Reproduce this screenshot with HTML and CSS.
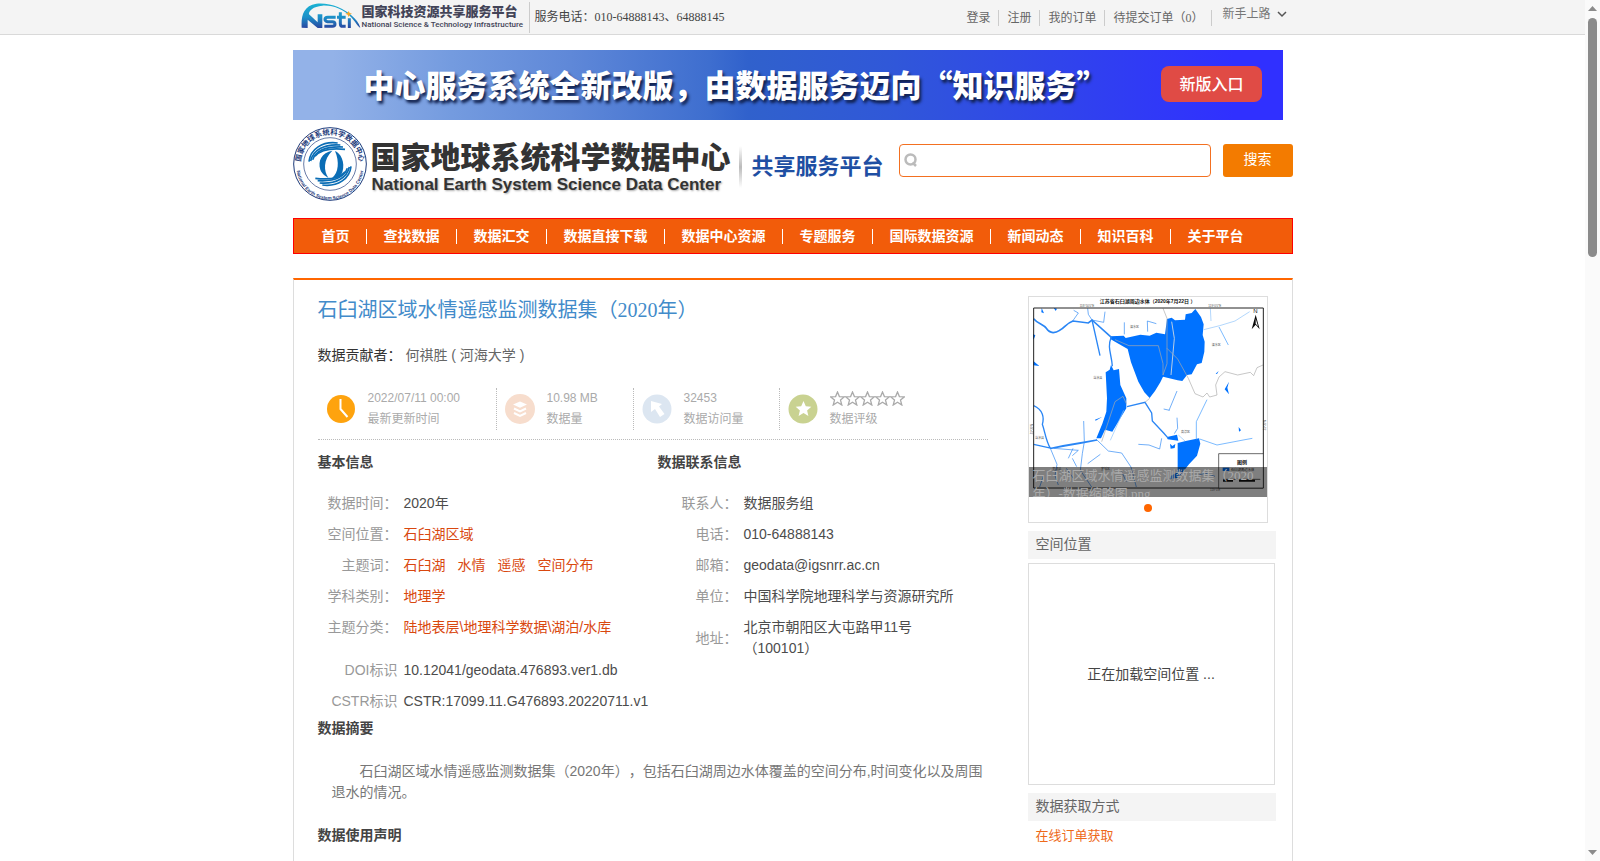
FILE: index.html
```html
<!DOCTYPE html>
<html lang="zh-CN">
<head>
<meta charset="utf-8">
<title>石臼湖区域水情遥感监测数据集（2020年）</title>
<link rel="stylesheet" href="styles.css">
</head>
<body>
<div class="page">
  <header class="topbar">
    <div class="wrap topbar-inner">
      <a class="nsti" href="#">
        <svg class="nsti-mark" width="60" height="27" viewBox="0 0 180 81" aria-hidden="true">
          <defs>
            <linearGradient id="nstiFill" gradientUnits="userSpaceOnUse" x1="0" y1="0" x2="0" y2="78">
              <stop offset="0" stop-color="#1bb4d4"/><stop offset="0.55" stop-color="#1c8fc8"/><stop offset="1" stop-color="#2a3f9c"/>
            </linearGradient>
          </defs>
          <path fill="url(#nstiFill)" d="M2 74C0 40 6 8 46 2C88-2 128 16 150 36C164 48 174 60 178 74C170 70 164 58 152 44C130 20 96 6 64 8C34 10 22 26 24 34L50 58V34H64V75H50L20 50V75Z"/>
          <path fill="none" stroke="url(#nstiFill)" stroke-width="9" d="M104 43H80Q72 43 72 49T80 56H94Q102 56 102 63T94 70H70M118 28V62Q118 70 126 70H134M108 43H134M145 46V75"/>
          <path fill="#f5a623" d="M143 24l3 6 7 2-7 3-3 7-3-7-7-3 7-2z"/>
        </svg>
        <span class="nsti-text"><strong>国家科技资源共享服务平台</strong><small>National Science &amp; Technology Infrastructure</small></span>
      </a>
      <p class="phone">服务电话：010-64888143、64888145</p>
      <nav class="account" aria-label="账户">
        <a href="#">登录</a><a href="#">注册</a><a href="#">我的订单</a><a href="#">待提交订单（0）</a>
        <button class="guide" type="button">新手上路
          <svg width="10" height="7" viewBox="0 0 10 7" aria-hidden="true"><path d="M1 1l4 4 4-4" fill="none" stroke="#555" stroke-width="1.5"/></svg>
        </button>
      </nav>
    </div>
  </header>

  <div class="wrap">
    <div class="banner">
      <p class="banner-text">中心服务系统全新改版，由数据服务迈向“知识服务”</p>
      <a class="banner-btn" href="#">新版入口</a>
    </div>

    <div class="brand">
      <svg class="seal" width="74" height="74" viewBox="0 0 222 222" role="img" aria-label="国家地球系统科学数据中心">
        <defs>
          <path id="arcTop" d="M25 130A88 88 0 1 1 197 130"/>
          <path id="arcBottom" d="M10 117A101 101 0 0 0 212 117"/>
        </defs>
        <circle cx="111" cy="111" r="109" fill="#fff" stroke="#1c3a7a" stroke-width="3"/>
        <circle cx="111" cy="111" r="79" fill="none" stroke="#1c3a7a" stroke-width="2"/>
        <text class="seal-cn"><textPath href="#arcTop" startOffset="50%" text-anchor="middle">国家地球系统科学数据中心</textPath></text>
        <text class="seal-en"><textPath href="#arcBottom" startOffset="50%" text-anchor="middle">National Earth System Science Data Center</textPath></text>
        <path fill="#0a6db5" d="M118 71C86 76 74 102 82 128C88 142 98 148 106 152C92 132 90 98 118 71ZM126 72C142 78 158 104 148 136C144 148 132 154 118 152C136 138 140 104 126 72Z"/>
        <g fill="none" stroke="#0a6db5" stroke-width="5">
          <path d="M48 104C52 66 88 42 134 48"/><path d="M53 102C60 70 92 50 142 54"/><path d="M59 98C68 72 98 58 150 60"/><path d="M66 88C80 70 106 62 156 67"/>
          <path d="M174 118C170 156 134 180 88 174"/><path d="M169 120C162 152 130 172 80 168"/><path d="M163 124C154 150 124 164 74 161"/><path d="M156 134C142 152 116 160 67 154"/>
        </g>
      </svg>
      <div class="brand-name"><strong>国家地球系统科学数据中心</strong><span>National Earth System Science Data Center</span></div>
      <span class="brand-rule"></span>
      <span class="brand-sub">共享服务平台</span>
      <form class="search">
        <label class="search-box">
          <svg width="14" height="15" viewBox="0 0 14 15" aria-hidden="true"><circle cx="6.500" cy="6.500" r="5" fill="none" stroke="#bbb" stroke-width="2.500"/><path d="M8.500 9.500l3.500 3.500" stroke="#bbb" stroke-width="2.500"/></svg>
          <input type="text" aria-label="搜索数据">
        </label>
        <button type="submit">搜索</button>
      </form>
    </div>

    <nav class="mainnav" aria-label="主导航">
      <a href="#">首页</a><a href="#">查找数据</a><a href="#">数据汇交</a><a href="#">数据直接下载</a><a href="#">数据中心资源</a><a href="#">专题服务</a><a href="#">国际数据资源</a><a href="#">新闻动态</a><a href="#">知识百科</a><a href="#">关于平台</a>
    </nav>

    <main class="panel">
      <article class="detail">
        <h1>石臼湖区域水情遥感监测数据集（2020年）</h1>
        <p class="author"><span>数据贡献者：</span> 何祺胜 ( 河海大学 )</p>

        <ul class="stats">
          <li class="stat stat-time">
            <svg width="30" height="30" viewBox="0 0 30 30" aria-hidden="true"><circle cx="15" cy="15" r="14" fill="#fea30e"/><path d="M14.500 5v10l7 8" fill="none" stroke="#fff" stroke-width="2"/></svg>
            <p>2022/07/11 00:00<br>最新更新时间</p>
          </li>
          <li class="stat stat-size">
            <svg width="30" height="30" viewBox="0 0 30 30" aria-hidden="true"><circle cx="15" cy="15" r="15" fill="#f7ddcd"/><path d="M15 7.500l7 3-7 3.300-7-3.300z" fill="#fff"/><path d="M9 14.500l6 2.800 6-2.800M9 19l6 2.800 6-2.800" fill="none" stroke="#fff" stroke-width="2"/></svg>
            <p>10.98 MB<br>数据量</p>
          </li>
          <li class="stat stat-views">
            <svg width="30" height="30" viewBox="0 0 30 30" aria-hidden="true"><circle cx="15" cy="15" r="14.500" fill="#dce6f1"/><path d="M9 7l11 3-3 2.500 5.500 7.500-4.500 3-5-8-4 3z" fill="#fff"/></svg>
            <p>32453<br>数据访问量</p>
          </li>
          <li class="stat">
            <svg width="30" height="30" viewBox="0 0 30 30" aria-hidden="true"><circle cx="15" cy="15" r="14.500" fill="#c9d291"/><path d="M15.500 7l2.300 5.200 5.500.5-4.200 3.700 1.300 5.600-4.900-3-4.900 3 1.300-5.600-4.200-3.700 5.500-.5z" fill="#fff"/></svg>
            <p>
              <svg class="stars" width="75" height="15" viewBox="0 0 75 15" role="img" aria-label="五星评级">
                <defs><path id="star" d="M7.500 1l1.900 4.600 4.900.3-3.800 3.200 1.300 4.900-4.300-2.700-4.300 2.700 1.300-4.900L.7 5.900l4.900-.3z" fill="none" stroke="#aaa" stroke-width="1.300"/></defs>
                <use href="#star"/><use href="#star" x="15"/><use href="#star" x="30"/><use href="#star" x="45"/><use href="#star" x="60"/>
              </svg>
              <br>数据评级</p>
          </li>
        </ul>

        <div class="columns">
          <section>
            <h2>基本信息</h2>
            <dl class="info">
              <dt>数据时间：</dt><dd>2020年</dd>
              <dt>空间位置：</dt><dd><a href="#">石臼湖区域</a></dd>
              <dt>主题词：</dt><dd class="tags"><a href="#">石臼湖</a><a href="#">水情</a><a href="#">遥感</a><a href="#">空间分布</a></dd>
              <dt>学科类别：</dt><dd><a href="#">地理学</a></dd>
              <dt>主题分类：</dt><dd><a href="#">陆地表层\地理科学数据\湖泊/水库</a></dd>
            </dl>
            <dl class="info ids">
              <dt>DOI标识</dt><dd>10.12041/geodata.476893.ver1.db</dd>
              <dt>CSTR标识</dt><dd>CSTR:17099.11.G476893.20220711.v1</dd>
            </dl>
          </section>
          <section>
            <h2>数据联系信息</h2>
            <dl class="info contact">
              <dt>联系人：</dt><dd>数据服务组</dd>
              <dt>电话：</dt><dd>010-64888143</dd>
              <dt>邮箱：</dt><dd>geodata@igsnrr.ac.cn</dd>
              <dt>单位：</dt><dd>中国科学院地理科学与资源研究所</dd>
              <dt>地址：</dt><dd>北京市朝阳区大屯路甲11号<br>（100101）</dd>
            </dl>
          </section>
        </div>

        <section class="summary">
          <h2>数据摘要</h2>
          <p>石臼湖区域水情遥感监测数据集（2020年），包括石臼湖周边水体覆盖的空间分布,时间变化以及周围退水的情况。</p>
          <h2>数据使用声明</h2>
        </section>
      </article>

      <aside class="side">
        <figure class="thumb">
          <div class="thumb-pic">
            <svg width="238" height="200" viewBox="42 36 714 600" role="img" aria-label="石臼湖区域水体分布图">
              <rect x="42" y="36" width="714" height="600" fill="#fff"/>
              <g class="map-text">
                <text x="254" y="54" class="map-title">江苏省石臼湖周边水体（2020年7月22日 ）</text>
                <text x="194" y="67">118°50′0″E</text><text x="580" y="67">119°0′0″E</text>
                <text x="345" y="129">溧水区</text><text x="590" y="183">溧水区</text><text x="235" y="281">当涂县</text><text x="498" y="445">高淳区</text><text x="60" y="463">当涂县</text><text x="258" y="556">宣城区</text><text x="112" y="556">芜湖县</text>
                <text transform="translate(54 448) rotate(-90)">31°20′N</text><text transform="translate(753 436) rotate(-90)">31°20′N</text>
                <text x="198" y="618">118°50′E</text><text x="585" y="618">119°0′E</text>
                <text x="715" y="85" class="map-n">N</text>
              </g>
              <path fill="#0a0a0a" d="M722 89l12 44-12-14-12 14z"/><path fill="#fff" d="M722 101l7 23-7-8z"/>
              <g fill="#0072ff">
                <path d="M286 154L326 152L332 159L376 149L404 152L424 143L450 148L456 102L470 98L480 106L510 104L512 88L530 84L541 72L558 96L566 118L563 150L569 170L568 200L560 234L546 238L530 268L516 270L502 288L488 286L444 275L436 292L420 318L404 339L388 322L370 290L348 232L338 192L300 170L286 162Z"/>
                <path d="M272 262L284 254L288 240L296 256L312 252L316 300L334 340L334 370L292 440L270 434L258 460L244 460L262 416L274 380L276 340Z"/>
                <path d="M488 474L512 468L552 460L556 476L546 512L522 538L490 578L464 582L468 572L488 562Z"/>
                <path d="M456 456l30-7 4 18-32-4zM465 476l7 7 9-6-2 12-12 2zM642 290l-5 18 5 20-13-15zM54 147l7 4-4 10-3 2zM55 228l18 15-18-2zM80 69l7 16-8-3zM116 68l10 3-4 7zM602 266l9-8-5 9zM671 426l7 10-6 4zM240 404l22-9-20 12z"/>
              </g>
              <g fill="none" stroke="#2a86f5" stroke-width="2">
                <path stroke-width="5" d="M56 101C70 118 86 118 94 130C106 148 122 144 134 136C150 128 152 116 174 108L220 114L231 105L290 158"/>
                <path stroke-width="4" d="M231 105L255 212M288 158C276 188 290 208 292 244M336 365L390 352L410 384L412 408L446 444L460 460"/>
                <path d="M173 108L190 84L176 76M231 105L220 88L218 70M231 105L266 112L270 80M328 112V148M398 140L397 108L424 116"/>
                <path stroke-width="4" d="M56 362C84 374 88 398 82 418C90 440 92 466 106 490L144 482L246 465M56 478L110 490L200 474L246 465"/>
                <path d="M106 490L126 538L120 572L130 600M116 490L190 496L172 512M206 408L208 470L202 506L196 556L230 606M160 520L174 490M172 520L185 545M154 550L175 580M218 536L256 508"/>
                <path d="M246 465L280 498L320 504L348 546L364 606M370 478L402 480L434 492L440 460M462 376L486 318M486 398L488 430L478 446M446 372L464 376M86 570L74 606M320 560L334 590M548 572L570 564L600 574"/>
                <path stroke="#3a98ff" d="M544 464V410L576 344M554 462L606 480L690 464L712 460M612 126L640 180"/>
                <path stroke="#8cc2fa" d="M566 134L614 122L660 108L704 80M586 70L588 108M326 376L286 466M490 450L510 468"/>
              </g>
              <path fill="none" stroke="#b8cde5" stroke-width="3" d="M470 110L478 160L468 270"/>
              <path fill="none" stroke="#aaa" stroke-width="2" d="M300 164L342 182L430 182L444 236V270L456 236V100L444 70M456 190L488 222L520 280L540 326L564 336L576 324L584 336L606 330L602 300L612 276L630 260L668 270L706 262L716 272L726 248L744 240M260 470L300 350L324 334L334 356M404 340L390 352"/>
              <path fill="none" stroke="#222" stroke-width="3" d="M56 69H745V609H56Z"/>
              <path fill="#fff" stroke="#222" stroke-width="2" d="M611 506H745V609H611Z"/>
              <text x="666" y="536" class="map-title">图例</text>
              <path fill="#0072ff" d="M623 548h20v10h-20z"/><text x="648" y="557" class="map-key">石臼湖周边水体</text>
              <path stroke="#111" stroke-width="6" d="M624 587h30M672 587h48"/><path stroke="#111" stroke-width="2" d="M624 583h112"/>
            </svg>
            <figcaption>石臼湖区域水情遥感监测数据集（2020年）-数据缩略图.png</figcaption>
          </div>
          <button class="dot" type="button" aria-label="第1张"></button>
        </figure>
        <h3>空间位置</h3>
        <div class="map-load">正在加载空间位置 ...</div>
        <h3>数据获取方式</h3>
        <a class="order" href="#">在线订单获取</a>
      </aside>
    </main>
  </div>
</div>
<div class="scrollbar" aria-hidden="true">
  <svg width="9" height="5" viewBox="0 0 9 5"><path d="M0 5L4.500 0 9 5z" fill="#8b8b8b"/></svg>
  <div class="track"><div class="handle"></div></div>
  <svg width="9" height="5" viewBox="0 0 9 5"><path d="M0 0h9L4.500 5z" fill="#8b8b8b"/></svg>
</div>
</body>
</html>
```
FILE: styles.css
```css
* { box-sizing: border-box; }

html, body { height: 100%; }

body {
  margin: 0;
  display: flex;
  overflow: hidden;
  background: #fff;
  color: #444;
  font: 14px/21px "Liberation Sans", "Noto Sans CJK SC", sans-serif;
  text-spacing-trim: space-all;
}

h1, h2, h3, p, ul, dl, dd, figure { margin: 0; padding: 0; }
ul { list-style: none; }
a { color: inherit; text-decoration: none; }
svg { flex: none; }
button, input { font: inherit; border: 0; background: none; padding: 0; }

.page { flex: 1; min-width: 0; overflow: hidden; }
.wrap { width: 100%; max-width: 1000px; margin: 0 auto; }

/* top bar */
.topbar { background: #f4f4f4; border-bottom: 1px solid #d9d9d9; }
.topbar-inner {
  display: flex;
  height: 34px;
  padding-left: 8px;
  font: 12px/16px "Liberation Serif", "Noto Sans CJK SC", serif;
}
.nsti {
  display: flex;
  gap: 1px;
  width: 229px;
  height: 31px;
  margin-top: 2px;
  padding-top: 1px;
  border-right: 1px solid #ccc;
  color: #434458;
}
.nsti-text {
  display: flex;
  flex-direction: column;
  font-family: Roboto, "Noto Sans CJK SC", sans-serif;
  white-space: nowrap;
}
.nsti-text strong { font-size: 13px; line-height: 17px; font-weight: 900; }
.nsti-text small { font-size: 8px; line-height: 9px; font-weight: 500; }
.phone { padding: 9px 0 0 5px; color: #444; font-family: "Liberation Serif", "Noto Sans CJK TC", serif; }
.account { display: flex; align-items: flex-start; margin-left: auto; padding: 10px 6px 0 0; color: #666; }
.account a { padding: 0 8px; border-right: 1px solid #ccc; }
.guide { display: flex; align-items: center; gap: 6px; margin-top: -4px; padding-left: 10px; color: #777; }

/* banner */
.banner {
  display: flex;
  align-items: center;
  justify-content: space-between;
  height: 70px;
  margin: 15px 10px 0 0;
  padding: 0 21px 3px 71px;
  background: linear-gradient(90deg, #93b2e8 0%, #93b2e8 4%, #749bdf 16%, #5f88d8 28%, #3e6ecf 42%, #3061cc 46%, #3058d8 60%, #3048e8 74%, #3038f8 88%, #3030ff 95%);
}
.banner-text {
  color: #fff;
  font: 900 31px/40px "Noto Sans CJK SC", sans-serif;
  text-shadow: 2px 3px 3px #10204c;
  white-space: nowrap;
}
.banner-btn {
  padding: 5px 18px 7px;
  border-radius: 8px;
  background: #e04b45;
  color: #fff;
  font: 500 16px/24px "Noto Sans CJK SC", sans-serif;
}

/* brand row */
.brand { display: flex; align-items: flex-start; padding: 7px 0 17px; }
.brand-name { display: flex; flex-direction: column; margin: 10px 0 0 4px; color: #333; white-space: nowrap; }
.brand-name strong { font: 900 30px/36px "Noto Sans CJK SC", sans-serif; }
.brand-name span { padding-left: 1px; font-weight: 700; font-size: 17px; line-height: 24px; text-shadow: 1px 1px 2px #aaa; }
.brand-rule {
  width: 3px;
  height: 42px;
  margin: 19px 10px 0 8px;
  background: linear-gradient(#fff, #bbb, #fff);
}
.brand-sub { margin-top: 22px; color: #1f4fa3; font: 700 22px/30px "Noto Sans CJK SC", sans-serif; white-space: nowrap; }
.search { display: flex; flex: 1; gap: 12px; margin: 17px 0 0 15px; }
.search-box {
  display: flex;
  flex: 1;
  align-items: center;
  height: 33px;
  padding: 0 4px;
  border: 1px solid #f37021;
  border-radius: 4px;
}
.search-box input { flex: 1; min-width: 0; padding-left: 6px; outline: 0; }
.search button { width: 70px; border-radius: 3px; background: #f37b00; color: #fff; padding-bottom: 2px; }

/* main navigation */
.mainnav {
  display: flex;
  align-items: center;
  height: 36px;
  padding-left: 11px;
  border: 1px solid #f00;
  background: #f25c0a;
  color: #fff;
  font-weight: 700;
}
.mainnav a { padding: 0 16px 0 17px; line-height: 15px; border-right: 1px solid #fff; white-space: nowrap; }
.mainnav a:last-child { border: 0; }

/* detail panel */
.panel {
  display: flex;
  justify-content: space-between;
  min-height: 900px;
  margin-top: 24px;
  padding: 15px 16px 0 24px;
  border: 1px solid #ddd;
  border-top: 2px solid #f60;
}
.detail { width: 670px; }
h1 { padding-top: 1px; color: #428bca; font: 400 20px/28px "Liberation Serif", "Noto Sans CJK SC", serif; }
.author { margin: 21px 0 22px; color: #666; }
.author span, .info dt { font-family: "Liberation Sans", "Noto Sans CJK TC", sans-serif; }
.author span { color: #333; }
.stats { display: flex; padding-bottom: 9px; border-bottom: 1px dotted #bbb; }
.stat { display: flex; align-items: center; gap: 12px; padding-left: 8px; color: #aaa; font-size: 12px; }
.stat-time, .stat-size, .stat-views { border-right: 1px dotted #bbb; }
.stat-time { width: 179px; }
.stat-size { width: 137px; }
.stat-views { width: 146px; }
.stars { vertical-align: middle; }

.columns { display: grid; grid-template-columns: 340px 1fr; margin-top: 12px; }
h2 { font-size: 14px; line-height: 21px; font-weight: 700; color: #444; }
.info {
  display: grid;
  grid-template-columns: 80px 1fr;
  column-gap: 6px;
  row-gap: 10px;
  align-items: center;
  margin-top: 20px;
  white-space: nowrap;
}
.info dt { color: #999; text-align: right; }
.info dd { color: #4c4c4c; }
.info dd a { color: #d9480f; }
.tags { display: flex; gap: 12px; }
.ids { margin-top: 22px; }

.summary { margin-top: 6px; }
.summary p { margin: 22px 0 22px 14px; color: #777; text-indent: 28px; }

/* sidebar */
.side { width: 248px; }
.thumb { width: 240px; margin-top: 1px; height: 227px; border: 1px solid #ddd; text-align: center; }
.thumb-pic { position: relative; height: 200px; }
.thumb-pic svg { display: block; }
.thumb figcaption {
  position: absolute;
  left: 0;
  right: 0;
  bottom: 0;
  height: 30px;
  padding: 0 4px;
  overflow: hidden;
  background: rgba(0, 0, 0, 0.5);
  color: #aaa;
  font: 13px/18px "Liberation Serif", "Noto Sans CJK SC", serif;
  text-align: left;
}
.dot { display: block; width: 8px; height: 8px; margin: 7px auto; border-radius: 50%; background: #f60; }
h3 { margin: 8px 0 4px; padding: 3px 8px 4px; background: #f4f4f4; color: #666; font-size: 14px; line-height: 21px; font-weight: 400; }
.map-load {
  display: flex;
  align-items: center;
  justify-content: center;
  height: 222px;
  margin-right: 1px;
  border: 1px solid #ddd;
}
.order { padding-left: 8px; color: #ee6a1a; font-size: 13px; }

.map-text { fill: #555; font-size: 9px; }
.map-title { fill: #111; font-size: 15px; font-weight: 700; }
.map-n { fill: #111; font-size: 18px; }
.map-key { fill: #111; font-size: 10px; }
.seal-cn { fill: #1c3a7a; font: 700 22px "Noto Sans CJK SC", sans-serif; }
.seal-en { fill: #1c3a7a; font: 700 14px "Liberation Sans", sans-serif; }

/* page scroll indicator */
.scrollbar {
  display: flex;
  flex: none;
  flex-direction: column;
  align-items: center;
  width: 15px;
  padding: 6px 0;
  background: #fafafa;
}
.track { flex: 1; width: 9px; padding: 7px 0; }
.handle { height: 29%; border-radius: 5px; background: #8b8b8b; }
```
